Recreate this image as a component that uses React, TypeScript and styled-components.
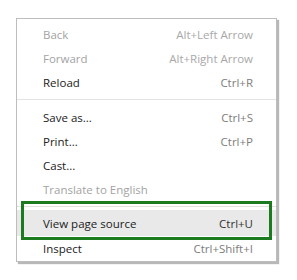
import styled, { createGlobalStyle } from 'styled-components';

const GlobalStyle = createGlobalStyle`
  html, body {
    margin: 0;
    padding: 0;
    background: #ffffff;
  }
  body {
    font-family: 'Segoe UI', 'Open Sans', 'Noto Sans', sans-serif;
  }
`;

const Page = styled.div`
  width: 297px;
  height: 280px;
  padding: 18px 0 0 16px;
  box-sizing: border-box;
`;

const Menu = styled.div`
  position: relative;
  width: 261px;
  box-sizing: border-box;
  border: 1px solid #bdbdbd;
  background: #ffffff;
  box-shadow: 2px 2px 1px rgba(0, 0, 0, 0.28);
  padding: 3px 0 1px;
`;

const Row = styled.div<{ $disabled?: boolean; $active?: boolean; $tall?: boolean }>`
  position: relative;
  display: flex;
  align-items: center;
  justify-content: space-between;
  height: ${p => (p.$tall ? 26 : 24)}px;
  padding: 0 23px 0 26px;
  font-size: 11.5px;
  color: ${p => (p.$disabled ? '#a3a3a3' : '#222222')};
  background: ${p => (p.$active ? '#e9e9e9' : 'transparent')};
`;

const Shortcut = styled.span<{ $disabled?: boolean; $active?: boolean }>`
  color: ${p => (p.$active ? '#333333' : p.$disabled ? '#a8a8a8' : '#7d7d7d')};
`;

const Separator = styled.div<{ $top?: number; $bottom?: number }>`
  height: 1px;
  background: #e3e3e3;
  margin: ${p => p.$top ?? 5}px 0 ${p => p.$bottom ?? 5}px;
`;

const Highlight = styled.div`
  position: absolute;
  left: 4px;
  right: 4px;
  top: -9px;
  bottom: -4px;
  border: 3px solid #1c7a1f;
  pointer-events: none;
`;

type Item = { label: string; keys?: string; disabled?: boolean };

const group1: Item[] = [
  { label: 'Back', keys: 'Alt+Left Arrow', disabled: true },
  { label: 'Forward', keys: 'Alt+Right Arrow', disabled: true },
  { label: 'Reload', keys: 'Ctrl+R' },
];

const group2: Item[] = [
  { label: 'Save as...', keys: 'Ctrl+S' },
  { label: 'Print...', keys: 'Ctrl+P' },
  { label: 'Cast...' },
  { label: 'Translate to English', disabled: true },
];

const MenuRow = ({ item }: { item: Item }) => (
  <Row $disabled={item.disabled}>
    <span>{item.label}</span>
    {item.keys && <Shortcut $disabled={item.disabled}>{item.keys}</Shortcut>}
  </Row>
);

const App = () => (
  <>
    <GlobalStyle />
    <Page>
      <Menu>
        {group1.map(i => <MenuRow key={i.label} item={i} />)}
        <Separator />
        {group2.map(i => <MenuRow key={i.label} item={i} />)}
        <Separator $top={5} $bottom={3} />
        <Row $active $tall>
          <span>View page source</span>
          <Shortcut $active>Ctrl+U</Shortcut>
          <Highlight />
        </Row>
        <MenuRow item={{ label: 'Inspect', keys: 'Ctrl+Shift+I' }} />
      </Menu>
    </Page>
  </>
);

export default App;
